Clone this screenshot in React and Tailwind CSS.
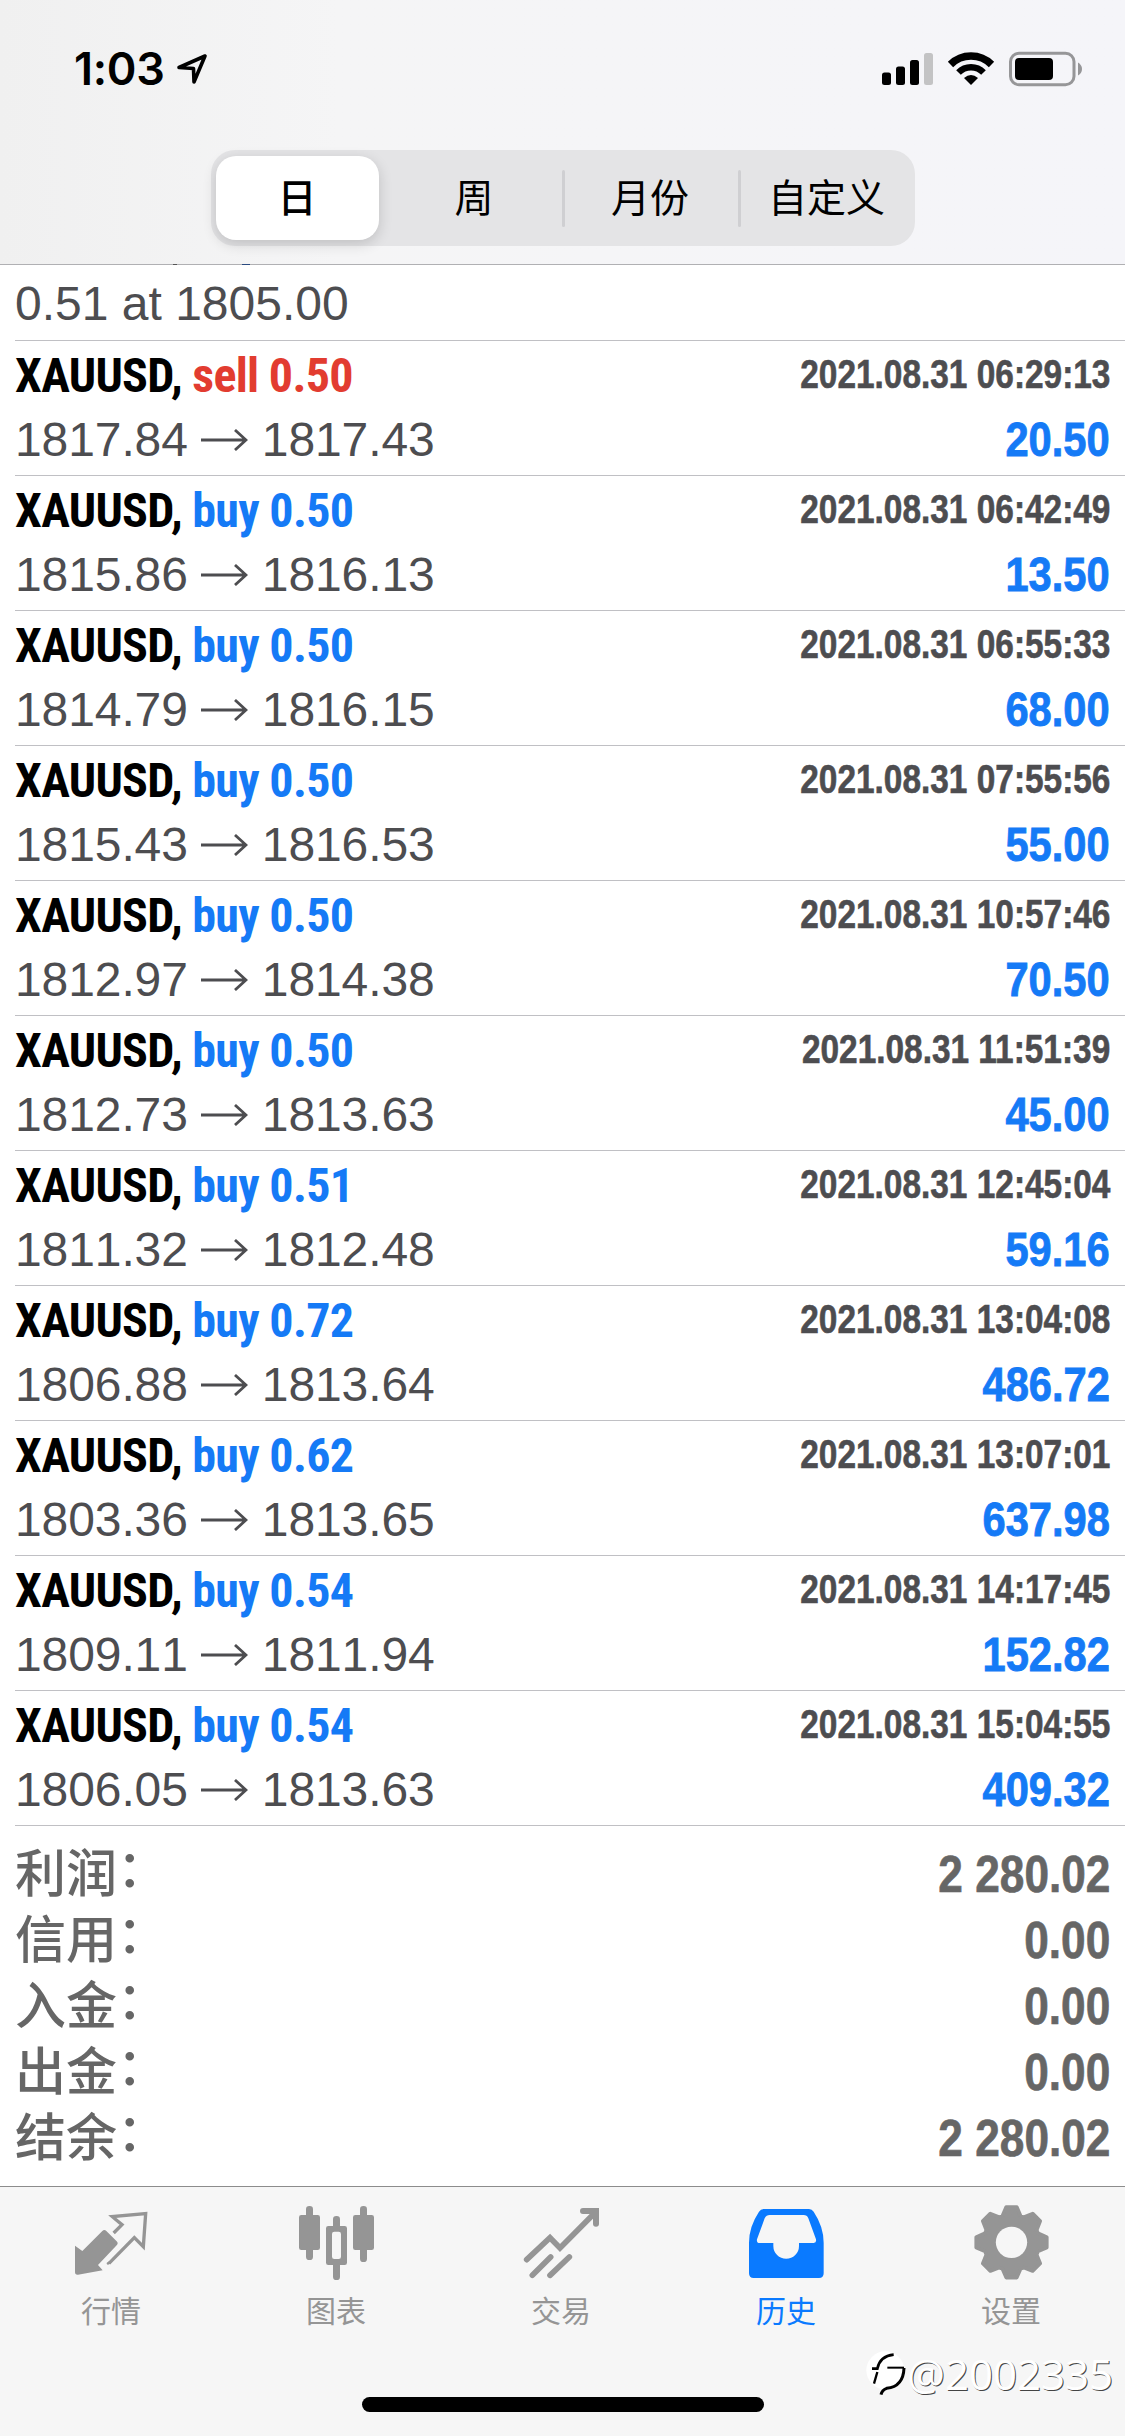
import React from 'react';

const ranges = ['日', '周', '月份', '自定义'];

const deals = [
  { type: 'sell', lots: '0.50', open: '1817.84', close: '1817.43', time: '2021.08.31 06:29:13', profit: '20.50' },
  { type: 'buy', lots: '0.50', open: '1815.86', close: '1816.13', time: '2021.08.31 06:42:49', profit: '13.50' },
  { type: 'buy', lots: '0.50', open: '1814.79', close: '1816.15', time: '2021.08.31 06:55:33', profit: '68.00' },
  { type: 'buy', lots: '0.50', open: '1815.43', close: '1816.53', time: '2021.08.31 07:55:56', profit: '55.00' },
  { type: 'buy', lots: '0.50', open: '1812.97', close: '1814.38', time: '2021.08.31 10:57:46', profit: '70.50' },
  { type: 'buy', lots: '0.50', open: '1812.73', close: '1813.63', time: '2021.08.31 11:51:39', profit: '45.00' },
  { type: 'buy', lots: '0.51', open: '1811.32', close: '1812.48', time: '2021.08.31 12:45:04', profit: '59.16' },
  { type: 'buy', lots: '0.72', open: '1806.88', close: '1813.64', time: '2021.08.31 13:04:08', profit: '486.72' },
  { type: 'buy', lots: '0.62', open: '1803.36', close: '1813.65', time: '2021.08.31 13:07:01', profit: '637.98' },
  { type: 'buy', lots: '0.54', open: '1809.11', close: '1811.94', time: '2021.08.31 14:17:45', profit: '152.82' },
  { type: 'buy', lots: '0.54', open: '1806.05', close: '1813.63', time: '2021.08.31 15:04:55', profit: '409.32' },
];

const summary = [
  { label: '利润', value: '2 280.02' },
  { label: '信用', value: '0.00' },
  { label: '入金', value: '0.00' },
  { label: '出金', value: '0.00' },
  { label: '结余', value: '2 280.02' },
];

// Eight-tooth gear outline around (487.5, 160)
const gearPath = () => {
  const points = [];
  for (let i = 0; i < 8; i++) {
    [[-19, 84], [-8.5, 107], [8.5, 107], [19, 84]].forEach(([offset, r]) => {
      const a = ((i * 45 + offset) * Math.PI) / 180;
      points.push(`${(487.5 + r * Math.sin(a)).toFixed(1)} ${(160 - r * Math.cos(a)).toFixed(1)}`);
    });
  }
  return `M${points.join('L')}Z`;
};

const QuotesIcon = () => (
  <svg className="size-[75px]" viewBox="105 45 225 225" fill="none">
    <path d="M105 167 L127 183 L187 123 Q193 117 199 123 L230 154 Q236 160 230 166 L174 225 L188 241 L114 254 Q105 255 105 246 Z" fill="currentColor" />
    <path d="M221 129 L246 104 L217 80 L317 71 L310 170 L283 143 L207 220" stroke="currentColor" strokeWidth="10" />
    <path d="M210 217 L204 220" stroke="currentColor" strokeWidth="8" strokeLinecap="round" />
  </svg>
);

const ChartIcon = () => (
  <svg className="size-[75px]" viewBox="780 45 225 225" overflow="visible" fill="currentColor">
    <rect x="777" y="75" width="63" height="105" rx="7" />
    <rect x="798" y="48" width="21" height="162" rx="10" />
    <rect x="939" y="75" width="63" height="105" rx="7" />
    <rect x="960" y="48" width="21" height="168" rx="10" />
    <rect x="879" y="78" width="21" height="40" rx="10" />
    <rect x="879" y="210" width="21" height="60" rx="10" />
    <path fillRule="evenodd" d="M865 108 H914 Q921 108 921 115 V218 Q921 225 914 225 H865 Q858 225 858 218 V115 Q858 108 865 108 Z M883 125 Q876 125 876 132 V200 Q876 207 883 207 H896 Q903 207 903 200 V132 Q903 125 896 125 Z" />
  </svg>
);

const TradeIcon = () => (
  <svg className="size-[75px]" viewBox="75 45 225 225" overflow="visible" fill="none" stroke="currentColor" strokeWidth="17" strokeLinecap="round">
    <path d="M80 209 L150 143 L180 174 L287 66" />
    <path d="M249 63 H288 V101" strokeWidth="18" />
    <path d="M97 256 L152 201 M150 256 L208 201" />
  </svg>
);

const HistoryIcon = () => (
  <svg className="size-[75px]" viewBox="750 45 225 225" overflow="visible" fill="currentColor">
    <path fillRule="evenodd" d="M791 57 H927 Q936 57 941 65 Q971 110 971 158 V250 Q971 264 957 264 H761 Q747 264 747 250 V158 Q747 110 777 65 Q782 57 791 57 Z M809 75 Q799 75 794 85 L771 148 Q769 159 779 159 H820 V168 A38.500 38.500 0 0 0 897 168 V159 H941 Q950 159 948 148 L925 85 Q921 75 911 75 Z" />
  </svg>
);

const SettingsIcon = () => (
  <svg className="size-[75px]" viewBox="378 48 225 225" overflow="visible">
    <path d={gearPath()} fill="currentColor" stroke="currentColor" strokeWidth="11" strokeLinejoin="round" />
    <circle cx="487.500" cy="160" r="47" fill="#f6f6f6" />
  </svg>
);

const tabs = [
  { label: '行情', Icon: QuotesIcon },
  { label: '图表', Icon: ChartIcon },
  { label: '交易', Icon: TradeIcon },
  { label: '历史', Icon: HistoryIcon, active: true },
  { label: '设置', Icon: SettingsIcon },
];

const StatusBar = () => (
  <div className="flex h-[150px] items-start justify-between pt-[46px] pr-[41px] pl-[74px]">
    <div className="flex">
      <span className="font-['Inter',sans-serif] text-[45px] leading-[46px] font-semibold tracking-[-0.3px] text-black">1:03</span>
      <svg className="mt-1.5 ml-[11px] h-[33px] w-[33px]" viewBox="176 52 33 33" fill="none" stroke="black" strokeWidth="3.600" strokeLinejoin="round">
        <path d="M205 56 L179 67.500 L193.500 68.500 L194 82 Z" />
      </svg>
    </div>
    <svg className="mt-[5px] h-9 w-[204px]" viewBox="880 51 204 36">
      <rect x="882" y="72.500" width="9" height="12.500" rx="2.500" />
      <rect x="896" y="66.500" width="9" height="18.500" rx="2.500" />
      <rect x="910" y="60" width="9" height="25" rx="2.500" />
      <rect x="924" y="53" width="9" height="32" rx="2.500" fill="#c3c3c4" />
      <g fill="none" stroke="black">
        <path d="M950.500 64.500 A29 29 0 0 1 991.500 64.500" strokeWidth="7.500" />
        <path d="M958.500 72.500 A17.500 17.500 0 0 1 983.500 72.500" strokeWidth="6.500" />
      </g>
      <path d="M971 85 L964 78 Q971 72 978 78 Z" />
      <rect x="1010.500" y="53.300" width="63.500" height="31.500" rx="8.500" fill="none" stroke="#969698" strokeWidth="3" />
      <rect x="1015" y="58" width="38" height="22" rx="4" />
      <path d="M1078 62.500 Q1082 65 1082 69 Q1082 73 1078 75.500 Z" fill="#969698" />
    </svg>
  </div>
);

const RangePicker = () => (
  <div className="mx-auto flex h-24 w-[704px] rounded-[24px] bg-[#e4e4e6]">
    {ranges.map((range, i) => (
      <div key={range} className="flex flex-1 items-center">
        {i === 0 ? (
          <div className="ml-[5px] flex h-[84px] w-[163px] items-center justify-center rounded-[20px] bg-white pt-0.5 text-[39px] font-medium text-black shadow-[0_4px_14px_rgba(0,0,0,0.16)]">
            {range}
          </div>
        ) : (
          <div className="flex flex-1 items-center justify-center pt-0.5 text-[39px] text-black">{range}</div>
        )}
        {(i === 1 || i === 2) && <div className="-mr-0.5 h-[57px] w-[3px] rounded-full bg-[#cfcfd2]" />}
      </div>
    ))}
  </div>
);

const DealRow = ({ deal }) => (
  <div className="ml-[15px] h-[135px] border-b border-[#c0c0c4] pt-[5px] pr-[15px]">
    <div className="flex h-[60px] items-start justify-between font-bold">
      <div className="font-['Roboto_Condensed',sans-serif] text-[48px] leading-[60px] tracking-[-0.700px] whitespace-nowrap text-black">
        XAUUSD, <span className={deal.type === 'sell' ? 'text-[#e23c30]' : 'text-[#157af6]'}>{deal.type} {deal.lots}</span>
      </div>
      <div className="origin-right scale-x-[0.835] text-[40px] leading-[57px] whitespace-nowrap text-[#4d4d50] [-webkit-text-stroke:0.6px_currentColor]">{deal.time}</div>
    </div>
    <div className="mt-px flex items-baseline justify-between leading-[64px]">
      <div className="flex items-center text-[48px] tracking-[-0.1px] text-[#4d4d50] [font-kerning:none]">
        <span>{deal.open}</span>
        <svg className="mr-[14px] ml-[13px] h-[22px] w-[47px]" viewBox="0 0 47 22" fill="none" stroke="currentColor" strokeWidth="2.800">
          <path d="M0 11 H45 M34 1 L45 11 L34 21" />
        </svg>
        <span>{deal.close}</span>
      </div>
      <div className="origin-right scale-x-[0.85] text-[49px] font-bold text-[#157af6] [-webkit-text-stroke:0.9px_currentColor] [font-kerning:none]">{deal.profit}</div>
    </div>
  </div>
);

const Watermark = () => (
  <div className="absolute right-[12px] bottom-[39px] flex items-center">
    <svg className="h-[46px] w-[40px]" viewBox="48 497 120 138">
      <circle cx="106" cy="555" r="57" fill="white" />
      <g fill="none" stroke="black">
        <path d="M66 550 H82 Q90 512 131 508" strokeWidth="8" />
        <path d="M112 547 H162" strokeWidth="6" />
        <path d="M82 560 L72 595" strokeWidth="7" />
        <path d="M162 548 Q160 604 110 609 Q96 614 93 628" strokeWidth="9" />
      </g>
    </svg>
    <span className="ml-px font-['Open_Sans',sans-serif] text-[42px] leading-[46px] text-white [text-shadow:1px_1px_0_#444]">@2002335</span>
  </div>
);

export default function App() {
  return (
    <div className="flex h-[2436px] w-[1125px] flex-col overflow-hidden bg-white font-['Liberation_Sans','Noto_Sans_CJK_SC',sans-serif]">
      {/* Header */}
      <header className="relative h-[265px] border-b border-[#b0b0b3] bg-linear-to-r from-[#f0f0f0] via-[#f5f5f6] via-30% to-[#f5f5f9]">
        <StatusBar />
        <RangePicker />
        {/* Descenders of the row scrolled under the bar */}
        <span className="absolute -bottom-px left-[173px] h-px w-1 bg-[#555]" />
        <span className="absolute -bottom-px left-[242px] h-px w-2 bg-[#2a4a80]" />
      </header>

      {/* History */}
      <main className="h-[1921px]">
        <div className="ml-[15px] h-[76px] border-b border-[#c0c0c4] pt-[7px] text-[48px] leading-[64px] text-[#4d4d50]">
          0.51 at 1805.00
        </div>
        {deals.map((deal) => (
          <DealRow key={deal.time} deal={deal} />
        ))}
        <div className="px-[15px] pt-4 text-[51px] leading-[66px] text-[#666]">
          {summary.map((item) => (
            <div key={item.label} className="flex h-[66px] justify-between">
              <div className="font-medium">
                {item.label}<span className="relative -top-[5px]">：</span>
              </div>
              <div className="origin-right scale-x-[0.85] text-[52px] leading-[64px] font-bold whitespace-nowrap [-webkit-text-stroke:0.7px_currentColor]">{item.value}</div>
            </div>
          ))}
        </div>
      </main>

      {/* Tab bar */}
      <footer className="relative flex h-[250px] flex-col border-t border-[#8c8c8c] bg-[#f6f6f6]">
        <nav className="grid grid-cols-5 pt-[18px]">
          {tabs.map(({ label, Icon, active }) => (
            <div key={label} className={active ? 'flex flex-col items-center text-[#0a7aff]' : 'flex flex-col items-center text-[#959595]'}>
              <Icon />
              <span className="mt-[11px] mr-[3px] text-[30px] leading-[42px]">{label}</span>
            </div>
          ))}
        </nav>
        <div className="mx-auto mt-auto mb-6 h-[15px] w-[402px] rounded-full bg-black" />
        <Watermark />
      </footer>
    </div>
  );
}
